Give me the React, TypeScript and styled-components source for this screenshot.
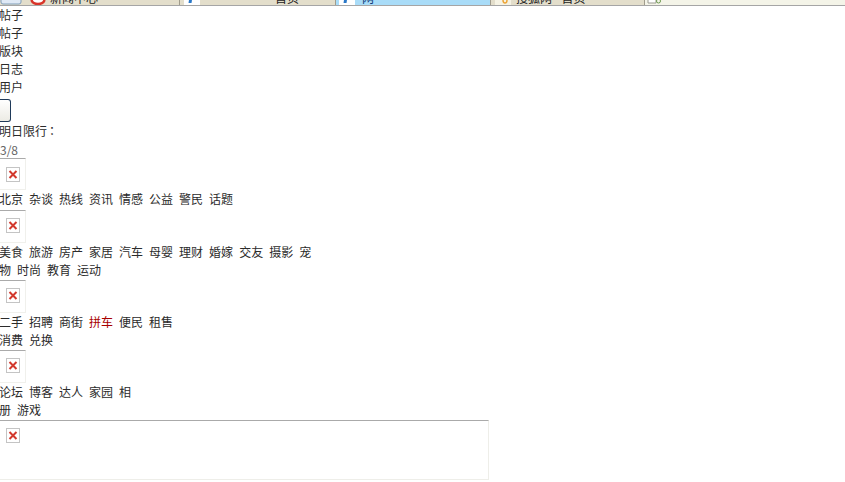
import React from "react";
import styled, { createGlobalStyle } from "styled-components";

const Global = createGlobalStyle`
  html, body { margin: 0; padding: 0; background: #fff; overflow: hidden; }
  body { font-family: "Noto Sans CJK SC", "Liberation Sans", sans-serif; font-size: 12px; color: #2b2b2b; }
`;
const Page = styled.div`width: 845px; height: 482px; overflow: hidden; display: flex; flex-direction: column;`;
const TabStrip = styled.div`height: 5px; display: flex; background: #f4f4e8; border-bottom: 1px solid #a5a5a5; flex: none;`;
const Tab = styled.div<{ $w: number; $active?: boolean; $plain?: boolean }>`
  width: ${p => p.$w}px; flex: none; height: 5px; overflow: hidden; box-sizing: border-box;
  background: ${p => (p.$plain ? "#f4f4e8" : p.$active ? "#a9dcf8" : "#e3decb")};
  border-right: ${p => (p.$plain ? "none" : "1px solid #a09c8c")}; position: relative;
`;
const TabLabel = styled.span<{ $x: number; $active?: boolean }>`
  position: absolute; left: ${p => p.$x}px; top: -8px; font-size: 12px; line-height: 12px;
  color: ${p => (p.$active ? "#123c78" : "#222")}; white-space: nowrap;
`;
const TabIconBox = styled.span<{ $x: number }>`position: absolute; left: ${p => p.$x}px; top: 0; display: block; width: 16px; height: 5px;`;
const Nav = styled.div`display: flex; flex-direction: column; margin-left: -1px;`;
const NavItem = styled.div`height: 18px; line-height: 18px; font-size: 12px;`;
const Btn = styled.button`
  display: block; flex: none; width: 11px; height: 23px; margin: 3px 0 0; padding: 0;
  background: linear-gradient(#fff, #ecebe4); border: 1px solid #1f3a5a; border-left: none; border-radius: 0 3px 3px 0;
`;
const Info = styled.div`height: 18px; line-height: 18px; flex: none; margin-left: -1px;`;
const Colon = styled.span`font-family: "Noto Sans CJK TC", sans-serif; margin-left: -1px;`;
const Count = styled.div`color: #666; height: 18px; line-height: 20px; flex: none;`;
const IconCell = styled.div<{ $first?: boolean }>`
  width: 26px; height: ${p => (p.$first ? 32 : 33)}px; box-sizing: border-box; flex: none;
  border-top: 1px solid #aaa; border-right: 1px solid #f0f0ec; border-bottom: 1px solid #f0f0ec;
  padding: ${p => (p.$first ? 8 : 7)}px 0 0 6px; display: flex; align-items: flex-start;
`;
const LastCell = styled.div`
  width: 489px; height: 60px; box-sizing: border-box; flex: none;
  border-top: 1px solid #aaa; border-right: 1px solid #eeeee9; border-bottom: 1px solid #eeeee9;
  padding: 7px 0 0 6px;
`;
const Links = styled.div<{ $w: number; $first?: boolean }>`
  width: ${p => p.$w}px; line-height: 18px; margin: 0 0 ${p => (p.$first ? 2 : 1)}px -1px; flex: none;
`;
const Link = styled.span<{ $hot?: boolean }>`color: ${p => (p.$hot ? "#a80000" : "inherit")}; margin-right: 6px;`;

const Broken = () => (
  <svg width="14" height="15" viewBox="0 0 14 15" aria-hidden="true" display="block">
    <rect x="0.5" y="0.5" width="13" height="14" fill="#fff" stroke="#c4c4c4" />
    <path d="M3.5 4l7 7M10.5 4l-7 7" stroke="#d2382c" strokeWidth="2" />
  </svg>
);

const BlueBtn = () => (
  <svg width="22" height="5" viewBox="0 0 22 5" aria-hidden="true" display="block">
    <path d="M1 0v2q0 2 2 2h16q2 0 2-2V0" fill="#dfe9f5" stroke="#7f9db9" />
  </svg>
);
const RedIcon = () => (
  <svg width="16" height="5" viewBox="0 0 16 5" aria-hidden="true" display="block">
    <path d="M1.5 0q1 4 6.5 4t6.5-4" fill="#fff" stroke="#d8352a" strokeWidth="2.5" />
  </svg>
);
const PageIcon = () => (
  <svg width="16" height="5" viewBox="0 0 16 5" aria-hidden="true" display="block">
    <rect width="16" height="5" fill="#fff" />
    <path d="M5 0l-.5 3h3l.5-3z" fill="#2a78c8" />
  </svg>
);
const OrangeIcon = () => (
  <svg width="16" height="5" viewBox="0 0 16 5" aria-hidden="true" display="block">
    <rect width="16" height="5" fill="#f6f3e4" />
    <path d="M8 0q0 3 2 3t2-3" fill="none" stroke="#eda63a" strokeWidth="1.5" />
  </svg>
);
const NewTabIcon = () => (
  <svg width="16" height="5" viewBox="0 0 16 5" aria-hidden="true" display="block">
    <path d="M1 0v3h8V0" fill="#fff" stroke="#9a9a90" />
    <circle cx="11.5" cy="1" r="2" fill="none" stroke="#6c9a50" />
  </svg>
);

const Row = ({ items, w, hot, first }: { items: string[]; w: number; hot?: string; first?: boolean }) => (
  <Links $w={w} $first={first}>
    {items.map(t => <Link key={t} $hot={t === hot}>{t}</Link>)}
  </Links>
);

export default function App() {
  return (
    <Page>
      <Global />
      <TabStrip>
        <Tab $w={180}>
          <TabIconBox $x={0}><BlueBtn /></TabIconBox>
          <TabIconBox $x={30}><RedIcon /></TabIconBox>
          <TabLabel $x={50}>新闻中心</TabLabel>
        </Tab>
        <Tab $w={156}>
          <TabIconBox $x={4}><PageIcon /></TabIconBox>
          <TabLabel $x={95}>首页</TabLabel>
        </Tab>
        <Tab $w={155} $active>
          <TabIconBox $x={3}><PageIcon /></TabIconBox>
          <TabLabel $x={26} $active>网</TabLabel>
        </Tab>
        <Tab $w={154}>
          <TabIconBox $x={4}><OrangeIcon /></TabIconBox>
          <TabLabel $x={25}>搜狐网 - 首页</TabLabel>
        </Tab>
        <Tab $w={200} $plain>
          <TabIconBox $x={2}><NewTabIcon /></TabIconBox>
        </Tab>
      </TabStrip>
      <Nav>
        {["帖子", "帖子", "版块", "日志", "用户"].map((t, i) => <NavItem key={i}>{t}</NavItem>)}
      </Nav>
      <Btn aria-label="搜索" />
      <Info>明日限行<Colon>：</Colon></Info>
      <Count>3/8</Count>
      <IconCell $first><Broken /></IconCell>
      <Row first w={320} items={["北京","杂谈","热线","资讯","情感","公益","警民","话题"]} />
      <IconCell><Broken /></IconCell>
      <Row w={315} items={["美食","旅游","房产","家居","汽车","母婴","理财","婚嫁","交友","摄影","宠物","时尚","教育","运动"]} />
      <IconCell><Broken /></IconCell>
      <Row w={184} hot="拼车" items={["二手","招聘","商街","拼车","便民","租售","消费","兑换"]} />
      <IconCell><Broken /></IconCell>
      <Row w={135} items={["论坛","博客","达人","家园","相册","游戏"]} />
      <LastCell><Broken /></LastCell>
    </Page>
  );
}
